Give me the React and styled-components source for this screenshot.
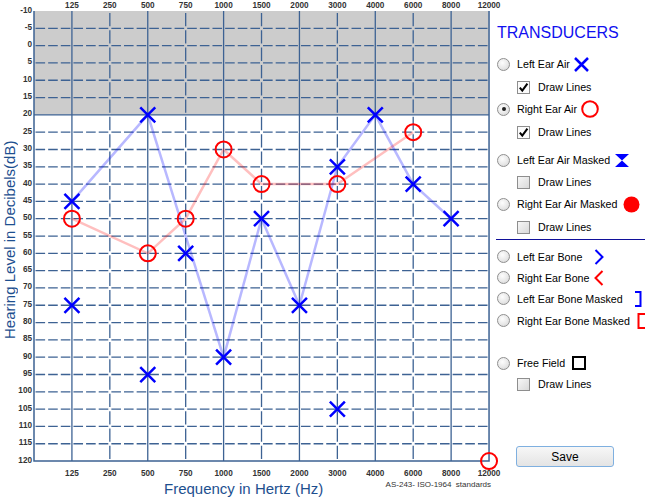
import React from 'react';
import styled, { createGlobalStyle, css } from 'styled-components';

const GlobalStyle = createGlobalStyle`
  html, body {
    margin: 0;
    padding: 0;
    background: #fff;
  }
  body {
    font-family: "Liberation Sans", Arial, sans-serif;
  }
`;

// audiogram geometry
const FREQS = ['125', '250', '500', '750', '1000', '1500', '2000', '3000', '4000', '6000', '8000', '12000'];
const LEFT = 34;
const TOP = 11;
const COL = 37.92;
const ROW = 17.31;
const GRID = '#3d6293';

const fx = (f) => LEFT + (FREQS.indexOf(String(f)) + 1) * COL;
const dy = (db) => TOP + ((db + 10) / 5) * ROW;

// left ear air (X)
const leftAir = [[125, 45], [500, 20], [1000, 90], [1500, 50], [2000, 75], [3000, 35], [4000, 20], [6000, 40], [8000, 50]];
const leftAirLoose = [[125, 75], [500, 95], [750, 60], [3000, 105]];
// right ear air (O)
const rightAir = [[125, 50], [500, 60], [750, 50], [1000, 30], [1500, 40], [3000, 40], [6000, 25]];
const rightAirLoose = [[12000, 120]];

const toPoints = (list) => list.map(([f, d]) => `${fx(f)},${dy(d)}`).join(' ');

function Cross({ x, y }) {
    const s = 7.5;
    return (
        <path
            d={`M${x - s} ${y - s}L${x + s} ${y + s}M${x + s} ${y - s}L${x - s} ${y + s}`}
            stroke="#0000ff"
            strokeWidth="2.5"
            fill="none"
        />
    );
}

function Ring({ x, y }) {
    return <circle cx={x} cy={y} r="8" stroke="#ff0000" strokeWidth="2" fill="none" />;
}

function Audiogram() {
    const right = fx(12000);
    const bottom = dy(120);
    const dbs = [];
    for (let d = -10; d <= 120; d += 5) dbs.push(d);

    return (
        <ChartSvg viewBox="18 0 476 480" width="476" height="480">
            <rect x={LEFT} y={TOP} width={right - LEFT} height={dy(20) - TOP} fill="#cccccc" />

            {/* horizontal grid */}
            {dbs.slice(1, -1).map((d) => (
                <line
                    key={'h' + d}
                    x1={LEFT}
                    x2={right}
                    y1={dy(d)}
                    y2={dy(d)}
                    stroke={GRID}
                    strokeWidth="1.3"
                    strokeDasharray={d === 20 ? undefined : '9.6 3.04'}
                    strokeDashoffset="-1.52"
                />
            ))}

            {/* vertical grid, octaves solid */}
            {FREQS.slice(0, -1).map((f, i) => (
                <line
                    key={'v' + f}
                    x1={fx(f)}
                    x2={fx(f)}
                    y1={TOP}
                    y2={bottom}
                    stroke={GRID}
                    strokeWidth="1.3"
                    strokeDasharray={i % 2 === 1 ? '13.3 4.01' : undefined}
                    strokeDashoffset="-2"
                />
            ))}

            {/* frame */}
            <path d={`M${LEFT} ${TOP}V${bottom}H${right}V${TOP}`} stroke={GRID} strokeWidth="1.5" fill="none" />

            {/* tick labels */}
            {FREQS.map((f) => (
                <React.Fragment key={'t' + f}>
                    <TickText x={fx(f)} y="8" textAnchor="middle">{f}</TickText>
                    <TickText x={fx(f)} y="476" textAnchor="middle">{f}</TickText>
                </React.Fragment>
            ))}
            {dbs.map((d) => (
                <TickText key={'l' + d} x="32" y={dy(d) + 1.5} textAnchor="end">{d}</TickText>
            ))}

            {/* connecting lines */}
            <polyline points={toPoints(leftAir)} stroke="rgba(0,0,255,0.28)" strokeWidth="2.5" fill="none" />
            <polyline points={toPoints(rightAir)} stroke="rgba(255,0,0,0.25)" strokeWidth="2.5" fill="none" />

            {[...rightAir, ...rightAirLoose].map(([f, d]) => (
                <Ring key={'r' + f + d} x={fx(f)} y={dy(d)} />
            ))}
            {[...leftAir, ...leftAirLoose].map(([f, d]) => (
                <Cross key={'x' + f + d} x={fx(f)} y={dy(d)} />
            ))}
        </ChartSvg>
    );
}

// legend icons
const icons = {
    cross: (
        <svg width="15" height="15" viewBox="0 0 15 15">
            <path d="M1 1L14 14M14 1L1 14" stroke="#0000ff" strokeWidth="2.5" fill="none" />
        </svg>
    ),
    ring: (
        <svg width="18" height="18" viewBox="0 0 18 18">
            <circle cx="9" cy="9" r="7.8" stroke="#ff0000" strokeWidth="2" fill="none" />
        </svg>
    ),
    hourglass: (
        <svg width="14" height="13" viewBox="0 0 14 13">
            <path d="M0 0H14L7 6.5ZM7 6.5L14 13H0Z" fill="#0000ff" />
        </svg>
    ),
    dot: (
        <svg width="17" height="17" viewBox="0 0 17 17">
            <circle cx="8.5" cy="8.5" r="8" fill="#ff0000" />
        </svg>
    ),
    chevronRight: (
        <svg width="10" height="16" viewBox="0 0 10 16">
            <path d="M1.5 1L8.5 8L1.5 15" stroke="#0000ff" strokeWidth="2" fill="none" />
        </svg>
    ),
    chevronLeft: (
        <svg width="10" height="16" viewBox="0 0 10 16">
            <path d="M8.5 1L1.5 8L8.5 15" stroke="#ff0000" strokeWidth="2" fill="none" />
        </svg>
    ),
    bracketRight: (
        <svg width="7" height="16" viewBox="0 0 7 16">
            <path d="M0 1H5.5V15H0" stroke="#0000ff" strokeWidth="2" fill="none" />
        </svg>
    ),
    bracketLeft: (
        <svg width="8" height="16" viewBox="0 0 8 16">
            <path d="M8 1H1.5V15H8" stroke="#ff0000" strokeWidth="2" fill="none" />
        </svg>
    ),
    square: (
        <svg width="14" height="14" viewBox="0 0 14 14">
            <rect x="1" y="1" width="12" height="12" stroke="#000" strokeWidth="2" fill="none" />
        </svg>
    ),
};

function RadioRow({ label, icon, gap, checked, mt, h }) {
    return (
        <Row $mt={mt} $h={h}>
            <Radio $checked={checked} />
            <span>{label}</span>
            {icon && <IconSlot $ml={gap}>{icons[icon]}</IconSlot>}
        </Row>
    );
}

function CheckRow({ checked, mt, h }) {
    return (
        <Row $mt={mt} $h={h} $indent>
            <CheckBox $checked={checked}>
                {checked && (
                    <svg width="11" height="11" viewBox="0 0 11 11">
                        <path d="M1.8 5.6L4.3 8.6L9.4 1.6" stroke="#000" strokeWidth="2" fill="none" />
                    </svg>
                )}
            </CheckBox>
            <span>Draw Lines</span>
        </Row>
    );
}

export default function App() {
    return (
        <>
            <GlobalStyle />
            <Page>
                <ChartColumn>
                    <YTitle>Hearing Level in Decibels(dB)</YTitle>
                    <Audiogram />
                    <Footer>
                        <XTitle>Frequency in Hertz (Hz)</XTitle>
                        <Standard>AS-243- ISO-1964  standards</Standard>
                    </Footer>
                </ChartColumn>

                <Panel>
                    <PanelTitle>TRANSDUCERS</PanelTitle>
                    <RadioRow label="Left Ear Air" icon="cross" gap={4} mt={9} />
                    <CheckRow checked mt={1} />
                    <RadioRow label="Right Ear Air" icon="ring" gap={4} checked />
                    <CheckRow checked mt={1} />
                    <RadioRow label="Left Ear Air Masked" icon="hourglass" gap={5} mt={6} />
                    <CheckRow />
                    <RadioRow label="Right Ear Air Masked" icon="dot" gap={6} />
                    <CheckRow mt={1} />
                    <Separator />
                    <RadioRow label="Left Ear Bone" icon="chevronRight" gap={12} mt={6} h={21} />
                    <RadioRow label="Right Ear Bone" icon="chevronLeft" gap={5} h={21} />
                    <RadioRow label="Left Ear Bone Masked" icon="bracketRight" gap={12} h={21} />
                    <RadioRow label="Right Ear Bone Masked" icon="bracketLeft" gap={7} mt={1} h={21} />
                    <RadioRow label="Free Field" icon="square" gap={7} mt={21} />
                    <CheckRow h={20} />
                    <SaveButton type="button">Save</SaveButton>
                </Panel>
            </Page>
        </>
    );
}

const Page = styled.div`
    display: flex;
    width: 645px;
    height: 500px;
    overflow: hidden;
`;

const ChartColumn = styled.div`
    position: relative;
    z-index: 1;
    width: 494px;
    flex-shrink: 0;
    display: grid;
    grid-template-columns: 18px 476px;
    grid-template-rows: 480px 20px;
`;

const YTitle = styled.div`
    writing-mode: vertical-rl;
    transform: rotate(180deg);
    display: flex;
    align-items: center;
    justify-content: center;
    font-size: 15px;
    color: #1d4f8f;
    white-space: nowrap;
`;

const ChartSvg = styled.svg`
    display: block;
    overflow: visible;
`;

const TickText = styled.text`
    font-family: "Liberation Sans", Arial, sans-serif;
    font-size: 8.2px;
    font-weight: bold;
    fill: #333;
`;

const Footer = styled.div`
    grid-column: 1 / -1;
    display: flex;
    align-items: flex-start;
    padding: 0 3px 0 164px;
`;

const XTitle = styled.div`
    font-size: 15px;
    line-height: 18px;
    color: #1d4f8f;
    white-space: nowrap;
`;

const Standard = styled.div`
    margin-left: auto;
    font-size: 8px;
    line-height: 10px;
    color: #333;
    white-space: pre;
`;

const Panel = styled.div`
    flex: 1;
    display: flex;
    flex-direction: column;
    padding-top: 22px;
    min-width: 0;
`;

const PanelTitle = styled.div`
    font-size: 16px;
    line-height: 22px;
    color: #1010f0;
    padding-left: 3px;
`;

const Row = styled.div`
    display: flex;
    align-items: center;
    height: ${(p) => p.$h || 22}px;
    margin-top: ${(p) => p.$mt || 0}px;
    padding-left: ${(p) => (p.$indent ? 23 : 3)}px;
    font-size: 10.7px;
    color: #000;
    white-space: nowrap;
`;

const Radio = styled.span`
    position: relative;
    flex-shrink: 0;
    width: 13px;
    height: 13px;
    box-sizing: border-box;
    border-radius: 50%;
    border: 1px solid #8f8f8f;
    background: radial-gradient(circle at 40% 35%, #fdfdfd 0%, #e8e8e8 55%, #d0d0d0 100%);
    margin-right: 7px;

    ${(p) => p.$checked && css`
        &::after {
            content: '';
            position: absolute;
            left: 3.5px;
            top: 3.5px;
            width: 4px;
            height: 4px;
            border-radius: 50%;
            background: #222;
        }
    `}
`;

const CheckBox = styled.span`
    flex-shrink: 0;
    width: 13px;
    height: 13px;
    box-sizing: border-box;
    border: 1px solid #8e8e8e;
    background: ${(p) => (p.$checked ? '#fbfbfb' : 'linear-gradient(135deg, #f7f7f7, #d9d9d9)')};
    display: flex;
    align-items: center;
    justify-content: center;
    margin-right: 8px;
`;

const IconSlot = styled.span`
    display: flex;
    align-items: center;
    margin-left: ${(p) => p.$ml}px;
`;

const Separator = styled.div`
    height: 1px;
    margin: 1px 0 0 2px;
    background: #10109a;
`;

const SaveButton = styled.button`
    margin: 52px 0 0 22px;
    width: 98px;
    height: 21px;
    padding: 0;
    border: 1px solid #7fb0e0;
    border-radius: 3px;
    background: linear-gradient(#f7f7f7, #e4e4e4);
    font-family: "Liberation Sans", Arial, sans-serif;
    font-size: 12px;
    color: #000;
`;
